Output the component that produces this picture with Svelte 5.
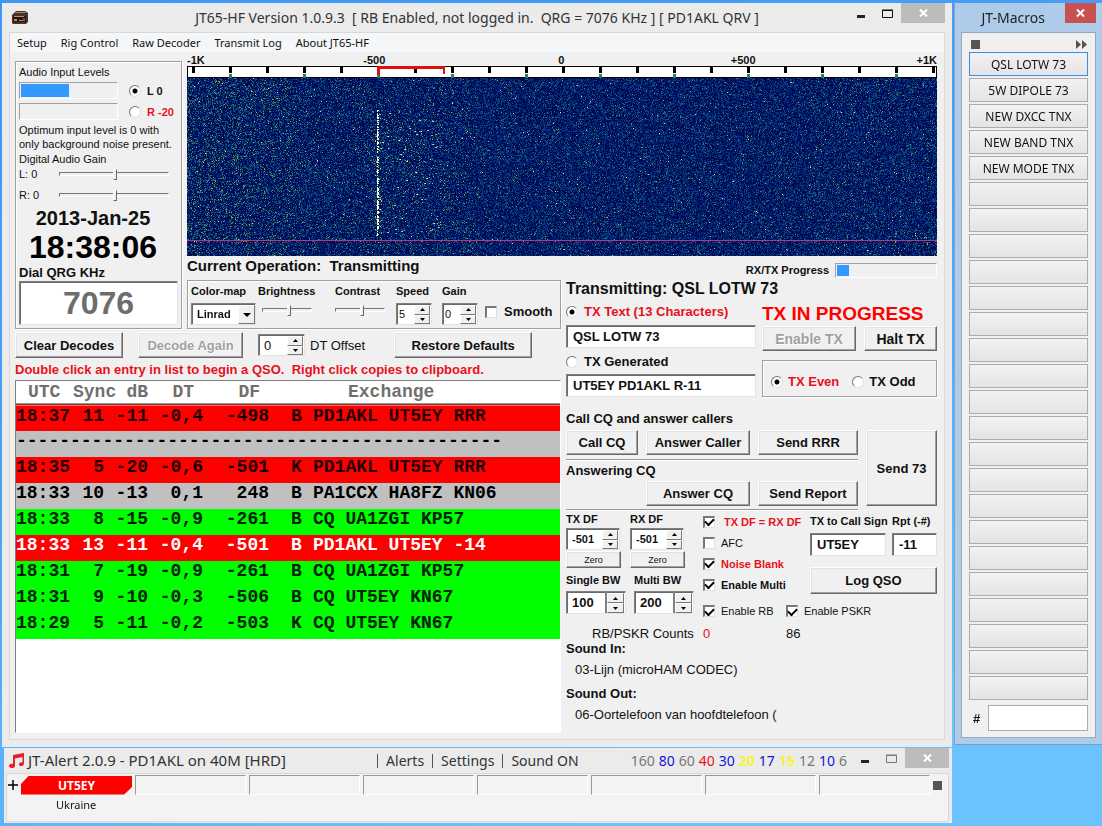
<script>
  import { onMount } from 'svelte'

  const menu = ['Setup', 'Rig Control', 'Raw Decoder', 'Transmit Log', 'About JT65-HF']

  const decodes = [
    { utc: '18:37', sync: '11', db: '-11', dt: '-0,4', df: '-498', type: 'B', text: 'PD1AKL UT5EY RRR', tone: 'red' },
    { divider: true },
    { utc: '18:35', sync: '5', db: '-20', dt: '-0,6', df: '-501', type: 'K', text: 'PD1AKL UT5EY RRR', tone: 'red' },
    { utc: '18:33', sync: '10', db: '-13', dt: '0,1', df: '248', type: 'B', text: 'PA1CCX HA8FZ KN06', tone: 'silver' },
    { utc: '18:33', sync: '8', db: '-15', dt: '-0,9', df: '-261', type: 'B', text: 'CQ UA1ZGI KP57', tone: 'green' },
    { utc: '18:33', sync: '13', db: '-11', dt: '-0,4', df: '-501', type: 'B', text: 'PD1AKL UT5EY -14', tone: 'red picked' },
    { utc: '18:31', sync: '7', db: '-19', dt: '-0,9', df: '-261', type: 'B', text: 'CQ UA1ZGI KP57', tone: 'green' },
    { utc: '18:31', sync: '9', db: '-10', dt: '-0,3', df: '-506', type: 'B', text: 'CQ UT5EY KN67', tone: 'green' },
    { utc: '18:29', sync: '5', db: '-11', dt: '-0,2', df: '-503', type: 'K', text: 'CQ UT5EY KN67', tone: 'green' }
  ]

  const macroTexts = ['QSL LOTW 73', '5W DIPOLE 73', 'NEW DXCC TNX', 'NEW BAND TNX', 'NEW MODE TNX']
  const macros = Array.from({ length: 25 }, (_, i) => macroTexts[i] || '')

  const bands = [
    ['160', 'off'], ['80', 'blue'], ['60', 'off'], ['40', 'hot'], ['30', 'blue'], ['20', 'yellow'],
    ['17', 'blue'], ['15', 'yellow'], ['12', 'off'], ['10', 'blue'], ['6', 'off']
  ]

  const ticks = Array.from({ length: 21 }, (_, i) => i)

  let waterfall

  // small seeded generator, so the noise is the same on every load
  function seeded(seed) {
    return () => {
      seed = (seed * 1664525 + 1013904223) >>> 0
      return seed / 4294967296
    }
  }

  onMount(() => {
    const ctx = waterfall.getContext('2d')
    const w = waterfall.width
    const h = waterfall.height
    const img = ctx.createImageData(w, h)
    const rnd = seeded(7076)
    const put = (x, y, r, g, b) => {
      const p = (y * w + x) * 4
      img.data[p] = r
      img.data[p + 1] = g
      img.data[p + 2] = b
      img.data[p + 3] = 255
    }

    for (let y = 0; y < h; y++) {
      for (let x = 0; x < w; x++) {
        const heat = x < 110 ? 1 - x / 400 : x < 290 ? 0.5 : x < 620 ? 0.28 : 0.4
        const r = rnd()
        const v = rnd()
        if (r < 0.03 * heat) put(x, y, 100 + v * 70, 140 + v * 40, 50)
        else if (r < 0.2 * heat) put(x, y, 15 + v * 30, 85 + v * 50, 95 + v * 20)
        else if (r < 0.4) put(x, y, 5, 38 + v * 40, 100 + v * 35)
        else put(x, y, 0, v * 22, 72 + v * 42)
        if (rnd() < 0.001) put(x, y, 215, 230, 215)
      }
    }

    // sync tone with its data tones to the right
    for (let y = 32; y < 158; y++) {
      const strong = y < 40 || (y > 52 && y < 68) || y > 98
      if (rnd() < (strong ? 0.85 : 0.4)) {
        put(190, y, 255, 255, 240)
        if (rnd() < 0.6) put(191, y, 240, 255, 220)
      }
      if (rnd() < 0.35) put(188 + Math.floor(rnd() * 7), y, 170, 210, 90)
      for (let k = 0; k < 4; k++) {
        if (rnd() < 0.2) {
          const x = 192 + Math.floor(rnd() * 66)
          put(x, y, 160, 190, 80)
          if (rnd() < 0.3) put(x + 1, y, 240, 240, 210)
        }
      }
    }
    for (let x = 0; x < w; x++) put(x, 162, 190, 50, 130)
    ctx.putImageData(img, 0, 0)
  })
</script>

{#snippet arrows(label)}
  <span class="arrows">
    <button aria-label="{label} up"><svg viewBox="0 0 5 3"><path d="M0 3h5L2.500 0z" /></svg></button>
    <button aria-label="{label} down"><svg viewBox="0 0 5 3"><path d="M0 0h5L2.500 3z" /></svg></button>
  </span>
{/snippet}

{#snippet spin(label, value, cls)}
  <span class="spin {cls}">
    <input aria-label={label} {value} />
    {@render arrows(label)}
  </span>
{/snippet}

{#snippet controls(min)}
  <div class="controls">
    {#if min}
      <button class="min" aria-label="Minimize"><svg width="8" height="3"><path d="M0 0h8v3H0z" fill="#222" /></svg></button>
      <button class="max" aria-label="Maximize"><svg width="11" height="9"><path d="M.5 1.500h10v7H.5zM0 1h11" fill="none" stroke="currentColor" /></svg></button>
    {/if}
    <button class="close" aria-label="Close"><svg width="9" height="8"><path d="M1 .5l7 7M8 .5l-7 7" stroke="#fff" stroke-width="2" /></svg></button>
  </div>
{/snippet}

<div class="desktop">
  <div class="left">
    <main class="window main">
      <header class="titlebar">
        <svg class="radio-icon" width="16" height="14" viewBox="0 0 16 14">
          <path d="M2 2l2-2h9l3 2v9l-2 2H1l-1-1V4z" fill="#4a3226" />
          <path d="M2 2h12l-1-1H4z" fill="#a58a72" />
          <path d="M1 5h13v6H1z" fill="#211713" />
          <path d="M2 5h10v1H2zM2 8h3v2H2zM7 9h4v1H7z" fill="#b98b74" />
          <path d="M11 7h2v3h-2z" fill="#8a4a38" />
        </svg>
        <h1>JT65-HF Version 1.0.9.3&nbsp; [ RB Enabled, not logged in.&nbsp; QRG = 7076 KHz ] [ PD1AKL QRV ]</h1>
        {@render controls(true)}
      </header>

      <div class="client">
        <nav class="menu">
          {#each menu as item}
            <button>{item}</button>
          {/each}
        </nav>

        <div class="body">
          <section class="panel frame">
            <div class="small">Audio Input Levels</div>
            <div class="levels">
              <div class="bar"><div class="fill" style="width: 51%"></div></div>
              <label class="b11"><input type="radio" name="chan" checked />L 0</label>
              <div class="bar"></div>
              <label class="b11 red"><input type="radio" name="chan" />R -20</label>
            </div>
            <p class="small hint">Optimum input level is 0 with<br />only background noise present.</p>
            <div class="small">Digital Audio Gain</div>
            <label class="small gain"><span>L: 0</span><input type="range" value="51" /></label>
            <label class="small gain"><span>R: 0</span><input type="range" value="51" /></label>
            <div class="date">2013-Jan-25</div>
            <div class="clock">18:38:06</div>
            <label class="b13" for="qrg">Dial QRG KHz</label>
            <input id="qrg" class="qrg" value="7076" />
          </section>

          <section class="spectrum">
            <div class="scale"><span>-1K</span><span>-500</span><span>0</span><span>+500</span><span>+1K</span></div>
            <svg class="ruler" viewBox="0 0 750 12" preserveAspectRatio="none">
              <path d="M0 0h750v12H0z" fill="#000" />
              <path d="M1 1h748v10H1z" fill="#fff" />
              {#each ticks as i}
                <rect x={5 + i * 37} y="1" width="3" height="6" />
                {#if i % 2}<rect x={5 + i * 37} y="8" width="3" height="4" fill="#23806c" />{/if}
              {/each}
              <path d="M190 0h68v8h-2V3h-63v6h-3z" fill="#e01010" />
            </svg>
            <canvas bind:this={waterfall} width="750" height="178"></canvas>
          </section>

          <section class="ops">
            <div class="current">Current Operation:&nbsp; Transmitting</div>
            <div class="frame display">
              <label class="wide">Color-map
                <span class="drop">
                  <select><option>Linrad</option></select>
                  <span class="knob"><svg width="8" height="4"><path d="M0 0h8L4 4z" /></svg></span>
                </span>
              </label>
              <label class="mid">Brightness<input type="range" value="54" /></label>
              <label class="mid">Contrast<input type="range" value="54" /></label>
              <div class="num">Speed {@render spin('Speed', '5', 'thin')}</div>
              <div class="num last-num">Gain {@render spin('Gain', '0', 'thin')}</div>
              <label class="smooth"><input type="checkbox" />Smooth</label>
            </div>
          </section>

          <section class="list">
            <div class="actions">
              <button class="btn">Clear Decodes</button>
              <button class="btn" disabled>Decode Again</button>
              <label class="offset">{@render spin('DT Offset', '0', 'plain')}DT Offset</label>
              <button class="btn restore">Restore Defaults</button>
            </div>
            <p class="tip">Double click an entry in list to begin a QSO.&nbsp; Right click copies to clipboard.</p>
            <div class="log">
              <table>
                <colgroup>
                  <col class="c-utc" /><col class="c-sync" /><col class="c-db" /><col class="c-dt" /><col class="c-df" /><col class="c-type" /><col />
                </colgroup>
                <thead>
                  <tr><th>UTC</th><th>Sync</th><th>dB</th><th>DT</th><th>DF</th><th></th><th>Exchange</th></tr>
                </thead>
                <tbody>
                  {#each decodes as d}
                    {#if d.divider}
                      <tr class="silver"><td colspan="7">{'-'.repeat(45)}</td></tr>
                    {:else}
                      <tr class={d.tone}>
                        <td>{d.utc}</td><td>{d.sync}</td><td>{d.db}</td><td>{d.dt}</td><td>{d.df}</td><td>{d.type}</td><td>{d.text}</td>
                      </tr>
                    {/if}
                  {/each}
                </tbody>
              </table>
            </div>
          </section>

          <section class="tx">
            <div class="progress"><span>RX/TX Progress</span><div class="bar"><div class="fill" style="width: 12%"></div></div></div>
            <div class="sending">Transmitting: QSL LOTW 73</div>

            <div class="message">
              <div class="choices">
                <label class="b13 red"><input type="radio" name="msg" checked />TX Text (13 Characters)</label>
                <input class="field" aria-label="TX Text" value="QSL LOTW 73" />
                <label class="b13"><input type="radio" name="msg" />TX Generated</label>
                <input class="field" aria-label="TX Generated" value="UT5EY PD1AKL R-11" />
              </div>
              <div class="state">
                <div class="alarm">TX IN PROGRESS</div>
                <div class="pair">
                  <button class="btn big" disabled>Enable TX</button>
                  <button class="btn big">Halt TX</button>
                </div>
                <div class="frame parity">
                  <label class="b13 red"><input type="radio" name="slot" checked />TX Even</label>
                  <label class="b13"><input type="radio" name="slot" />TX Odd</label>
                </div>
              </div>
            </div>

            <div class="b13 caption">Call CQ and answer callers</div>
            <div class="calls">
              <button class="btn">Call CQ</button>
              <button class="btn">Answer Caller</button>
              <button class="btn">Send RRR</button>
              <button class="btn seventy">Send 73</button>
              <div class="rule b13">Answering CQ</div>
              <button class="btn acq">Answer CQ</button>
              <button class="btn">Send Report</button>
              <div class="rule last"></div>
            </div>

            <div class="tuning">
              <div class="steps">
                <div class="df">
                  <div>TX DF {@render spin('TX DF', '-501', '')}<button class="btn zero">Zero</button></div>
                  <div>RX DF {@render spin('RX DF', '-501', '')}<button class="btn zero">Zero</button></div>
                </div>
                <div class="df widths">
                  <div>Single BW {@render spin('Single BW', '100', 'bw')}</div>
                  <div>Multi BW {@render spin('Multi BW', '200', 'bw')}</div>
                </div>
              </div>
              <div class="checks">
                <label class="red wide-gap"><input type="checkbox" checked />TX DF = RX DF</label>
                <label class="light"><input type="checkbox" />AFC</label>
                <label class="red"><input type="checkbox" checked />Noise Blank</label>
                <label><input type="checkbox" checked />Enable Multi</label>
              </div>
              <div class="report">
                <label>TX to Call Sign<input class="field" value="UT5EY" /></label>
                <label>Rpt (-#)<input class="field" value="-11" /></label>
                <button class="btn">Log QSO</button>
              </div>
              <div class="net">
                <label><input type="checkbox" checked />Enable RB</label>
                <label><input type="checkbox" checked />Enable PSKR</label>
              </div>
              <div class="counts">RB/PSKR Counts</div>
              <div class="net totals"><span class="red">0</span><span>86</span></div>
            </div>

            <dl>
              <dt>Sound In:</dt>
              <dd>03-Lijn (microHAM CODEC)</dd>
              <dt>Sound Out:</dt>
              <dd>06-Oortelefoon van hoofdtelefoon (</dd>
            </dl>
          </section>
        </div>
      </div>
    </main>

    <section class="window alert">
      <header class="titlebar">
        <svg width="15" height="15" viewBox="0 0 15 15">
          <path d="M4 2l11-2v10.500c0 3-5 3.500-5 1s3-2.500 3.500-2V4L6 5.500V13c0 3-6 2.500-6 0s3-2.500 4-2z" fill="#e5202c" />
        </svg>
        <h2>JT-Alert 2.0.9 - PD1AKL on 40M [HRD]</h2>
        <nav><i></i><button>Alerts</button><i></i><button>Settings</button><i></i><button>Sound ON</button></nav>
        <div class="bands">
          {#each bands as [name, tone]}<span class={tone}>{name}</span>{/each}
        </div>
        {@render controls(true)}
      </header>
      <div class="client">
        <div class="slots">
          <button class="plus" aria-label="Add"><svg width="10" height="10"><path d="M5 0v10M0 5h10" stroke="#000" stroke-width="1.500" /></svg></button>
          <div class="call">UT5EY</div>
          {#each Array(7) as _}<div class="slot"></div>{/each}
          <button class="square" aria-label="Stop"></button>
        </div>
        <div class="country">Ukraine</div>
      </div>
    </section>
  </div>

  <aside class="window macros">
    <header class="titlebar">
      <h2>JT-Macros</h2>
      {@render controls(false)}
    </header>
    <div class="client">
      <div class="tools">
        <button class="square" aria-label="Stop"></button>
        <button aria-label="More"><svg width="11" height="9"><path d="M0 0l5 4.500L0 9zM6 0l5 4.500L6 9z" fill="#555" /></svg></button>
      </div>
      {#each macros as text, i}
        <button class="macro" class:active={i === 0} aria-label={text ? null : `Macro ${i + 1}`}>{text}</button>
      {/each}
      <label class="number"># <input aria-label="Number" /></label>
    </div>
  </aside>
</div>

<style>
  :global(body) {
    background: linear-gradient(160deg, #3d97f7 0%, #49a0f7 40%, #6cc1ff 85%);
    min-height: 100vh;
  }
  * { box-sizing: border-box; }
  button, input, select { font: inherit; color: inherit; }
  button { background: none; border: 0; padding: 0; white-space: nowrap; }
  h1, h2, p, dl, dd { margin: 0; font-weight: normal; }
  svg { display: block; }

  .desktop {
    display: grid;
    grid-template-columns: minmax(0, 1fr) 148px;
    gap: 2px;
    align-items: start;
    padding: 3px 0 4px 2px;
    font-family: "Liberation Sans", Arial, sans-serif;
    font-size: 13px;
    color: #111;
  }

  /* windows */
  .window { background: #ebebeb; }
  .main { padding: 0 7px 7px; }
  .titlebar { display: grid; align-items: start; height: 29px; }
  h1, h2, .titlebar nav, .bands {
    font-family: "Noto Sans", "Segoe UI", sans-serif;
    font-size: 14px;
    line-height: 30px;
    white-space: nowrap;
    color: #333;
  }
  .main .titlebar { grid-template-columns: 1fr auto 1fr; }
  .radio-icon { margin: 8px 0 0 3px; }
  .controls { display: flex; justify-self: end; }
  .controls button { display: grid; place-items: center; height: 20px; }
  .min, .max { width: 27px; }
  .min svg { margin-top: 6px; }
  .close { width: 44px; background: #bcbcbc; }
  .client { border: 1px solid #d8d8d8; background: #f0f0f0; }

  .menu {
    display: flex;
    gap: 14px;
    height: 19px;
    padding: 0 7px;
    background: #f5f6f7;
    font-family: "Noto Sans", "Segoe UI", sans-serif;
    font-size: 11px;
  }

  .body {
    display: grid;
    grid-template-columns: 167px 374px minmax(0, 1fr);
    grid-template-rows: auto auto 1fr;
    grid-template-areas: "panel spectrum spectrum" "panel ops tx" "list list tx";
    column-gap: 5px;
    padding: 0 7px 6px 5px;
  }

  .frame { border: 1px solid #a0a0a0; box-shadow: 1px 1px #fff, inset 1px 1px #fff; }
  .red { color: #e8101c; }
  .small { font-size: 11px; line-height: 14px; }
  .b11 { font-size: 11px; font-weight: bold; }
  .b13 { font-size: 13px; font-weight: bold; line-height: 16px; }

  /* controls */
  .btn {
    height: 25px;
    font-weight: bold;
    background: #f0f0f0;
    border: 1px solid;
    border-color: #fff #696969 #696969 #fff;
    box-shadow: inset -1px -1px #a0a0a0, inset 1px 1px #e3e3e3;
  }
  .btn:disabled { color: #a0a0a0; text-shadow: 1px 1px #fff; }
  .field, .qrg, .spin, .drop {
    background: #fff;
    border: 1px solid;
    border-color: #808080 #e3e3e3 #e3e3e3 #808080;
    box-shadow: inset 1px 1px #696969;
  }
  .field { width: 100%; height: 23px; padding: 0 6px; font-size: 13px; font-weight: bold; min-width: 0; }
  input[type='radio'], input[type='checkbox'] {
    appearance: none;
    flex: none;
    width: 12px;
    height: 12px;
    margin: 0;
    background: #fff;
    border: 1px solid;
    border-color: #777 #e0e0e0 #e0e0e0 #777;
  }
  input[type='radio'] { border-radius: 50%; }
  input[type='radio']:checked { background: radial-gradient(circle, #000 2px, #fff 3px); }
  input[type='checkbox'] { display: grid; place-items: center; border-top-width: 2px; border-left-width: 2px; }
  input[type='checkbox']:checked::before {
    content: '';
    width: 7px;
    height: 4px;
    border: solid #000;
    border-width: 0 0 2px 2px;
    transform: rotate(-45deg);
    margin-bottom: 2px;
  }
  input[type='range'] { appearance: none; height: 14px; margin: 0; background: none; min-width: 0; }
  input[type='range']::-webkit-slider-runnable-track {
    height: 4px;
    border: 1px solid;
    border-color: #777 #fff #fff #777;
  }
  input[type='range']::-webkit-slider-thumb {
    appearance: none;
    width: 4px;
    height: 11px;
    margin-top: -4px;
    background: #f0f0f0;
    border: 1px solid;
    border-color: #fff #696969 #696969 #fff;
  }
  label:has(input[type='radio']), label:has(input[type='checkbox']) { display: flex; align-items: center; }

  .spin { display: flex; height: 22px; }
  .spin input { flex: 1; min-width: 0; width: 0; border: 0; padding: 0 0 0 5px; background: none; }
  .arrows { display: flex; flex-direction: column; width: 17px; padding: 1px 1px 0 0; }
  .arrows button {
    flex: 1;
    display: grid;
    place-items: center;
    background: #f0f0f0;
    border: 1px solid;
    border-color: #fff #777 #777 #fff;
  }
  .arrows svg { width: 5px; height: 3px; }

  .bar { height: 17px; padding: 1px; border: 1px solid; border-color: #a0a0a0 #fff #fff #a0a0a0; }
  .fill { height: 100%; background: #3399ff; }

  /* audio panel */
  .panel {
    grid-area: panel;
    display: flex;
    flex-direction: column;
    margin-top: 9px;
    padding: 3px 3px 3px;
  }
  .levels {
    display: grid;
    grid-template-columns: 99px 1fr;
    gap: 4px 11px;
    margin: 3px 0;
  }
  .levels label { gap: 6px; }
  .hint { line-height: 14px; white-space: nowrap; margin-bottom: 1px; }
  .gain { display: flex; align-items: center; height: 15px; }
  .gain + .gain { margin-top: 6px; }
  .gain span { width: 40px; }
  .gain input { width: 110px; }
  .date { margin-top: 3px; font-size: 20px; line-height: 26px; font-weight: bold; text-align: center; padding-right: 11px; }
  .clock { font-size: 32px; line-height: 32px; font-weight: bold; text-align: center; padding-right: 11px; color: #000; margin-bottom: 2px; }
  .qrg {
    width: 100%;
    height: 44px;
    font-size: 32px;
    font-weight: bold;
    text-align: center;
    color: #6d6d6d;
  }

  /* waterfall */
  .spectrum { grid-area: spectrum; padding-top: 2px; }
  .scale {
    display: grid;
    grid-template-columns: 23.5% 26% 23% 1fr auto;
    font-size: 11px;
    line-height: 12px;
    font-weight: bold;
  }
  .ruler { width: 100%; height: 12px; }
  canvas { display: block; width: 100%; height: 178px; }

  .ops { grid-area: ops; }
  .current { font-size: 15px; line-height: 20px; font-weight: bold; margin-bottom: 4px; }
  .display {
    display: flex;
    height: 49px;
    padding: 3px 3px 0;
    font-size: 11px;
    line-height: 14px;
    font-weight: bold;
  }
  .display > * { display: flex; flex-direction: column; gap: 5px; }
  .display .wide { width: 67px; }
  .display .mid { width: 77px; }
  .mid input { width: 50px; margin-left: 4px; }
  .mid:nth-child(3) { width: 61px; }
  .mid:nth-child(3) input { margin-left: 0; }
  .num { width: 46px; }
  .last-num { width: 43px; }
  .num .spin { width: 36px; }
  .spin.thin input { font-weight: normal; padding-left: 2px; }
  .drop { position: relative; display: block; width: 65px; height: 22px; }
  .drop select { appearance: none; width: 100%; height: 20px; border: 0; padding: 0 0 0 5px; background: none; }
  .knob {
    position: absolute;
    inset: 1px 0 0 auto;
    display: grid;
    place-items: center;
    width: 17px;
    background: #f0f0f0;
    border: 1px solid;
    border-color: #fff #777 #777 #fff;
    pointer-events: none;
  }
  .display .smooth {
    flex-direction: row;
    align-self: flex-start;
    gap: 7px;
    margin-top: 17px;
    font-size: 13px;
    line-height: 22px;
  }

  /* decode list */
  .list { grid-area: list; display: flex; flex-direction: column; padding-top: 2px; }
  .actions { display: flex; align-items: center; gap: 15px; height: 28px; }
  .actions .btn { width: 108px; height: 26px; }
  .actions .btn:disabled { width: 105px; }
  .actions .restore { width: 138px; margin-left: 14px; }
  .offset { display: flex; align-items: center; gap: 5px; white-space: nowrap; }
  .offset .spin { width: 47px; }
  .spin.plain input { font-size: 13px; }
  .tip { margin: 2px 0; line-height: 17px; font-weight: bold; color: #e8101c; white-space: nowrap; }
  .log { flex: 1; background: #fff; border: 1px solid #808080; border-right-color: #fff; border-bottom-color: #fff; }
  table {
    width: 100%;
    table-layout: fixed;
    border-collapse: collapse;
    font-family: "Liberation Mono", "Courier New", monospace;
    font-size: 18px;
    line-height: 20px;
    font-weight: bold;
    color: #000;
  }
  .c-utc { width: 57px; }
  .c-sync { width: 42px; }
  .c-db { width: 33px; }
  .c-dt { width: 55px; }
  .c-df { width: 66px; }
  .c-type { width: 44px; }
  th, td { padding: 0; white-space: nowrap; text-align: left; }
  th { height: 23px; border-bottom: 3px double #999; color: #707070; }
  td { height: 26px; padding-bottom: 5px; }
  th:nth-child(1) { padding-left: 12px; }
  td:nth-child(2) { text-align: right; padding-right: 11px; }
  th:nth-child(n + 3):nth-child(-n + 5), td:nth-child(n + 3):nth-child(-n + 5) { text-align: right; }
  th:nth-child(4), th:nth-child(5) { padding-right: 9px; }
  td:nth-child(6) { padding-left: 22px; }
  th:nth-child(7) { padding-left: 35px; }
  tr.red { background: #f00; color: #200; }
  tr.red.picked { color: #fff; }
  .silver { background: #c0c0c0; }
  .green { background: #0f0; color: #002000; }

  /* transmit side */
  .tx { grid-area: tx; padding: 7px 0 3px; }
  .progress { display: flex; justify-content: flex-end; align-items: center; gap: 6px; font-size: 11px; font-weight: bold; height: 14px; }
  .progress .bar { width: 102px; height: 15px; }
  .sending { font-size: 16px; line-height: 22px; font-weight: bold; margin: 1px 0; }
  .message { display: grid; grid-template-columns: 190px minmax(0, 1fr); gap: 6px; }
  .choices label { gap: 6px; height: 24px; white-space: nowrap; }
  .choices .field { display: block; margin-bottom: 2px; }
  .choices label:first-child { padding-bottom: 2px; }
  .alarm { font-size: 19px; line-height: 25px; font-weight: bold; color: #f00; white-space: nowrap; }
  .pair { display: grid; grid-template-columns: 94px 1fr; gap: 8px; }
  .big { font-size: 14px; }
  .parity { display: flex; align-items: center; gap: 13px; height: 37px; margin-top: 9px; padding: 6px 8px 0; }
  .parity label { gap: 5px; white-space: nowrap; }
  .caption { margin: 12px 0 3px; }
  .calls {
    display: grid;
    grid-template-columns: 72px 104px 100px minmax(0, 1fr);
    column-gap: 8px;
  }
  .seventy { grid-column: 4; grid-row: 1 / 4; height: auto; }
  .rule { grid-column: 1 / 4; margin-top: 4px; height: 22px; padding-top: 3px; border-top: 1px solid #999; box-shadow: inset 0 1px #fff; }
  .last { height: 2px; margin-top: 3px; padding: 0; }
  .acq { grid-column: 2; }

  .tuning {
    display: grid;
    grid-template-columns: 131px 101px minmax(0, 1fr);
    column-gap: 6px;
    font-size: 11px;
    line-height: 14px;
    font-weight: bold;
    white-space: nowrap;
  }
  .steps { grid-row: 1 / 3; padding-top: 1px; }
  .df { display: grid; grid-template-columns: 60px 60px; gap: 4px; }
  .df.widths { grid-template-columns: 64px 60px; margin-top: 5px; }
  .df .spin { width: 54px; margin-top: 2px; }
  .df .spin.bw { width: 60px; height: 23px; margin-top: 4px; font-size: 13px; }
  .bw .arrows { width: 20px; border-left: 2px solid #808080; }
  .zero { width: 55px; height: 17px; font-size: 9px; font-weight: normal; margin-top: 1px; display: block; }
  .checks label { height: 21px; gap: 6px; }
  .checks .wide-gap { gap: 9px; }
  .light, .net { font-weight: normal; }
  .report { display: grid; grid-template-columns: 76px minmax(0, 1fr); gap: 11px 6px; align-content: start; padding-top: 3px; }
  .report .field { margin-top: 5px; display: block; }
  .report .btn { grid-column: 1 / 3; font-size: 13px; height: 27px; }
  .net { grid-column: 2 / 4; display: flex; height: 24px; margin-top: 4px; }
  .net > * { width: 83px; gap: 6px; }
  .counts, .totals { font-size: 13px; font-weight: normal; line-height: 22px; height: 17px; margin: 0; }
  .counts { padding-left: 26px; }
  dt { font-weight: bold; line-height: 17px; }
  dd { padding: 3px 9px 6px; line-height: 19px; }

  /* alert window */
  .alert { margin: 1px 0 0 2px; padding: 0 3px 1px 2px; }
  .alert .titlebar {
    grid-template-columns: auto 1fr auto auto auto;
    height: 25px;
    padding-left: 3px;
    column-gap: 4px;
  }
  .alert .titlebar > svg { margin-top: 5px; }
  .alert h2, .alert nav, .bands { line-height: 25px; }
  .alert h2 { font-size: 15px; }
  .alert nav { display: flex; align-items: center; gap: 8px; margin-right: 48px; }
  .alert nav i { width: 1px; height: 14px; background: #555; }
  .bands { display: flex; gap: 4px; }
  .off { color: #777; }
  .blue { color: #1414d8; }
  .hot { color: #f01010; }
  .yellow { color: #f4f43c; font-weight: bold; }
  .alert .max { color: #777; }
  .alert .client { background: #f3f3f3; height: 49px; padding: 1px 5px 0 1px; }
  .slots { display: grid; grid-template-columns: 10px repeat(8, minmax(0, 1fr)) 10px; gap: 3px; align-items: center; }
  .slot { height: 20px; border: 1px solid; border-color: #999 #fff #fff #999; }
  .call {
    height: 19px;
    line-height: 19px;
    text-align: center;
    font-family: "Noto Sans", sans-serif;
    font-size: 12px;
    font-weight: bold;
    color: #fff;
    background: #f00;
    clip-path: polygon(8px 0, 100% 0, 100% 60%, 93% 100%, 0 100%, 0 45%);
  }
  .square { width: 9px; height: 9px; background: #555; }
  .country { font-family: "Noto Sans", sans-serif; font-size: 11px; line-height: 20px; padding-left: 48px; }

  /* macros */
  .macros { background: #aecbea; border-left: 1px solid #8aa4c0; border-bottom: 1px solid #7f9fc0; padding: 0 6px 6px; }
  .macros .titlebar { grid-template-columns: 1fr auto; column-gap: 20px; }
  .macros h2 { text-align: right; color: #222; }
  .macros .close { width: 31px; background: #c75050; }
  .macros .client { display: grid; gap: 2px; padding: 5px 7px 6px; border-color: #93a9c0; }
  .tools { display: flex; justify-content: space-between; align-items: center; height: 12px; padding: 0 1px 0 2px; }
  .macro {
    height: 24px;
    border: 1px solid #acacac;
    background: linear-gradient(#f2f2f2, #e4e4e4);
    font-family: "Noto Sans", Tahoma, sans-serif;
    font-size: 12px;
  }
  .macro.active { border-color: #3c8ce0; }
  .number { display: flex; align-items: center; gap: 8px; padding-left: 4px; margin-top: 3px; font-weight: bold; }
  .number input { width: 100%; min-width: 0; height: 26px; border: 1px solid #abadb3; background: #fff; }
</style>
